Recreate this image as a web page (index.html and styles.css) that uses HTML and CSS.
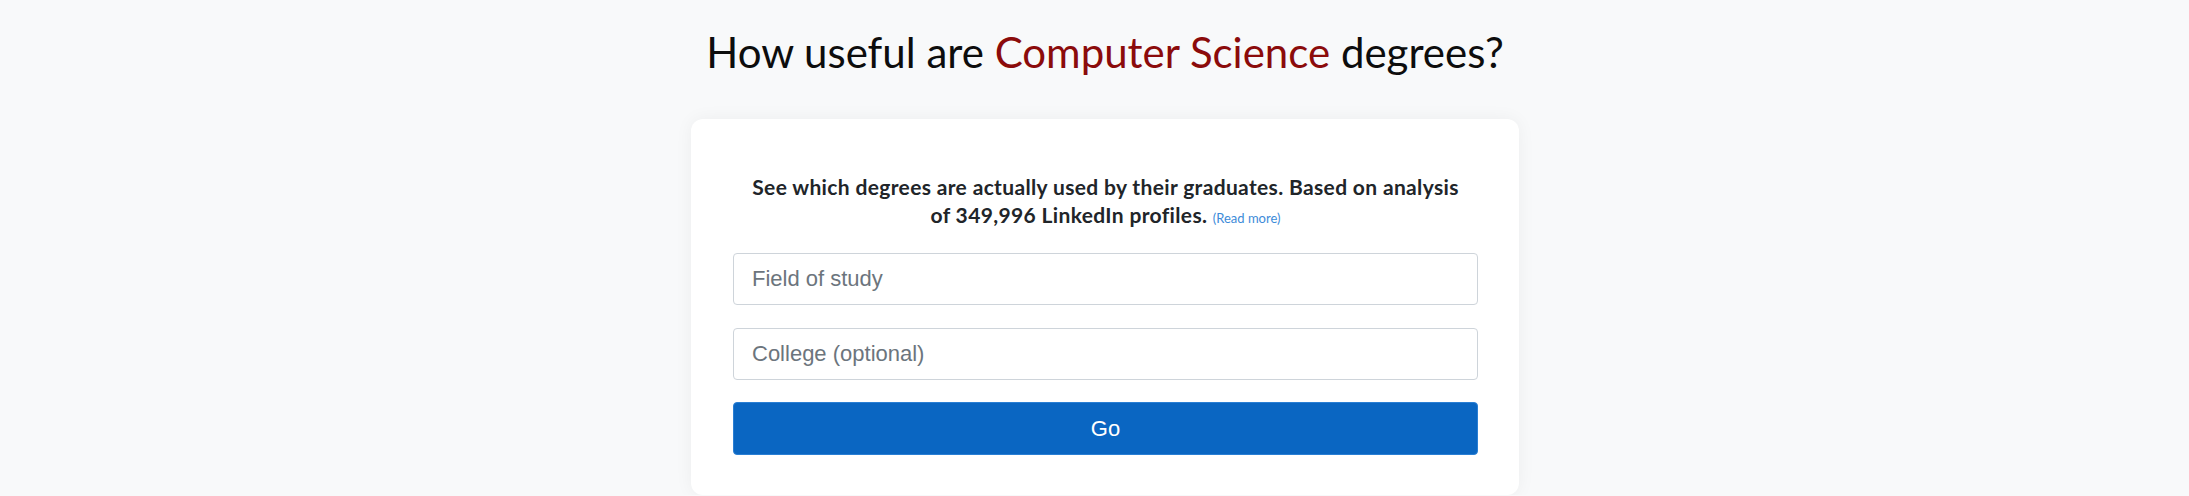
FILE: index.html
```html
<!DOCTYPE html>
<html lang="en">
<head>
<meta charset="utf-8">
<title>How useful are Computer Science degrees?</title>
<link rel="stylesheet" href="styles.css">
</head>
<body>
<div class="page">
  <h1 class="title">How useful are <span class="field">Computer Science</span> degrees?</h1>
  <form class="card">
    <p class="lead">See which degrees are actually used by their graduates. Based on analysis of 349,996 LinkedIn profiles. <a class="more" href="#">(Read more)</a></p>
    <input class="input" type="text" placeholder="Field of study">
    <input class="input" type="text" placeholder="College (optional)">
    <button class="go" type="button">Go</button>
  </form>
</div>
</body>
</html>
```
FILE: styles.css
```css
html, body {
  margin: 0;
  background: #f8f9fa;
}
body {
  font-family: Lato, "Noto Sans", sans-serif;
  color: #111;
}
.page {
  display: flex;
  flex-direction: column;
  align-items: center;
  padding-left: 21px;
}
.title {
  margin: 25px 0 0;
  font-size: 42px;
  font-weight: 400;
  line-height: 54px;
  color: #0d0d0d;
}
.field {
  color: #8b0b0b;
}
.card {
  box-sizing: border-box;
  width: 828px;
  margin-top: 40px;
  padding: 54px 41px 40px 42px;
  background: #fff;
  border-radius: 12px;
  box-shadow: 0 0 18px rgba(0, 0, 0, 0.05);
  display: flex;
  flex-direction: column;
}
.lead {
  margin: 0 0 24px;
  padding: 0 10px;
  font-size: 21px;
  line-height: 28px;
  letter-spacing: 0.35px;
  font-weight: 700;
  text-align: center;
  color: #212529;
}
.more {
  font-size: 13px;
  line-height: 1;
  letter-spacing: 0;
  font-weight: 400;
  color: #3d8bd9;
  text-decoration: none;
}
.input {
  box-sizing: border-box;
  height: 52px;
  margin: 0 0 23px;
  padding: 0 18px;
  border: 1px solid #ced4da;
  border-radius: 4px;
  font-family: "Liberation Sans", Arial, sans-serif;
  font-size: 22px;
  color: #495057;
  background: #fff;
}
.input::placeholder {
  color: #6c757d;
}
.input + .input {
  margin-bottom: 22px;
}
.go {
  box-sizing: border-box;
  height: 53px;
  border: 1px solid #2a7fd4;
  border-radius: 4px;
  background: #0a66c2;
  color: #fff;
  font-family: "Liberation Sans", Arial, sans-serif;
  font-size: 22px;
}
```
